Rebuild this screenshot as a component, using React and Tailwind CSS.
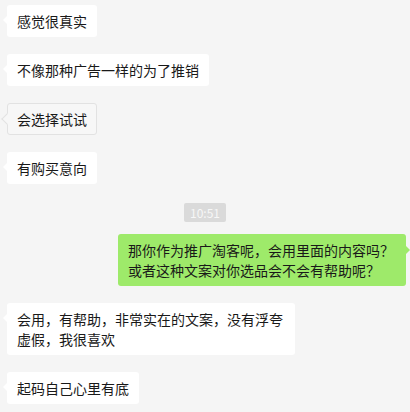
import React from "react";

const font = { fontFamily: '"Noto Sans CJK SC", "Noto Sans", sans-serif' };

function Left({ children, muted }) {
  if (muted) {
    return (
      <div className="flex">
        <div className="relative max-w-[288px] rounded-[3px] border border-[#e2e2e2] bg-[#f7f7f7] px-[9px] py-[5px] text-[14px] leading-[20px] text-[#191919]">
          <span className="absolute left-[-5px] top-[11px] h-[8px] w-[8px] rotate-45 border-b border-l border-[#e2e2e2] bg-[#f7f7f7]" />
          <span className="relative">{children}</span>
        </div>
      </div>
    );
  }
  return (
    <div className="flex">
      <div className="relative max-w-[288px] rounded-[3px] bg-white px-[10px] py-[6px] text-[14px] leading-[20px] text-[#191919]">
        <span className="absolute left-[-4px] top-[11px] h-0 w-0 border-y-[4px] border-r-[4px] border-y-transparent border-r-white" />
        {children}
      </div>
    </div>
  );
}

function Right({ children }) {
  return (
    <div className="flex justify-end pr-[4px]">
      <div className="relative max-w-[288px] rounded-[3px] bg-[#9eea6a] px-[10px] py-[6px] text-[14px] leading-[20px] text-[#191919]">
        <span className="absolute right-[-4px] top-[12px] h-0 w-0 border-y-[4px] border-l-[4px] border-y-transparent border-l-[#9eea6a]" />
        {children}
      </div>
    </div>
  );
}

export default function App() {
  return (
    <div
      className="h-[412px] w-[410px] overflow-hidden bg-[#f5f5f5] pl-[7px] pt-[5px]"
      style={font}
    >
      <div className="flex flex-col gap-[17px]">
        <Left>感觉很真实</Left>
        <Left>不像那种广告一样的为了推销</Left>
        <Left muted>会选择试试</Left>
        <Left>有购买意向</Left>
      </div>
      <div className="mt-[19px] flex justify-center pr-[7px]">
        <div className="rounded-[2px] bg-[#dadada] px-[6px] text-[12px] leading-[19px] text-[#f7f7f7]">
          10:51
        </div>
      </div>
      <div className="mt-[12px] flex flex-col gap-[17px]">
        <Right>
          那你作为推广淘客呢，会用里面的内容吗？或者这种文案对你选品会不会有帮助呢？
        </Right>
        <Left>会用，有帮助，非常实在的文案，没有浮夸虚假，我很喜欢</Left>
        <Left>起码自己心里有底</Left>
      </div>
    </div>
  );
}
